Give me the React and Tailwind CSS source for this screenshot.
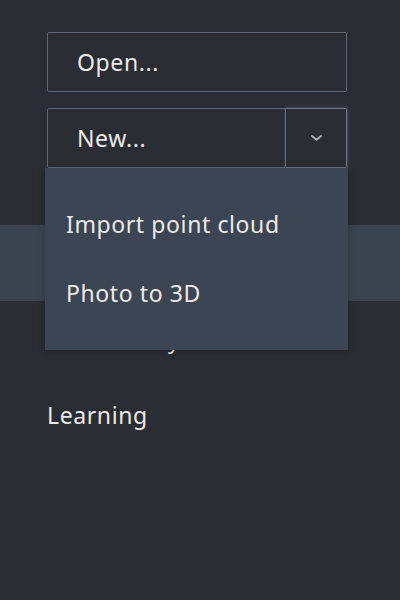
import React from "react";

export default function App() {
  const font = { fontFamily: '"Noto Sans", "Open Sans", sans-serif' };
  return (
    <div className="relative w-[400px] h-[600px] bg-[#2a2d34] text-[#eceae6] overflow-hidden tracking-[0.6px]" style={font}>
      <div className="flex flex-col pt-[32px]">
        <div className="px-[47px] flex flex-col gap-[16px]">
          <button className="h-[60px] w-[300px] border border-[#5e6a77] rounded-[2px] text-left pl-[29px] text-[23px] leading-none">
            Open...
          </button>
          <div className="relative">
            <div className="flex h-[60px] w-[300px]">
              <button className="flex-1 h-full border border-[#5e6a77] rounded-l-[2px] text-left pl-[29px] text-[23px] leading-none">
                New...
              </button>
              <button className="w-[61px] h-full border border-l-0 border-[#6a7785] rounded-r-[2px] flex items-center justify-center shadow-[0_0_3px_1px_rgba(120,135,150,0.35)]">
                <svg width="13" height="8" viewBox="0 0 13 8" fill="none">
                  <path d="M2 2l4.5 3.8L11 2" stroke="#a9b1ba" strokeWidth="2" strokeLinecap="round" strokeLinejoin="round" />
                </svg>
              </button>
            </div>
          </div>
        </div>
        <div className="mt-[57px] flex flex-col">
          <div className="h-[76px] bg-[#3a434e] flex items-center px-[47px] text-[23px]">Home</div>
          <div className="h-[76px] flex items-center px-[47px] text-[23px]">Data library</div>
          <div className="h-[76px] flex items-center px-[47px] text-[23px]">Learning</div>
        </div>
      </div>
      <div className="absolute left-[45px] top-[168px] w-[303px] h-[182px] bg-[#3c4553] py-[22px] flex flex-col shadow-[0_2px_6px_rgba(0,0,0,0.25)]">
        <div className="h-[69px] flex items-center pl-[21px] text-[23px]">Import point cloud</div>
        <div className="h-[69px] flex items-center pl-[21px] text-[23px]">Photo to 3D</div>
      </div>
    </div>
  );
}
